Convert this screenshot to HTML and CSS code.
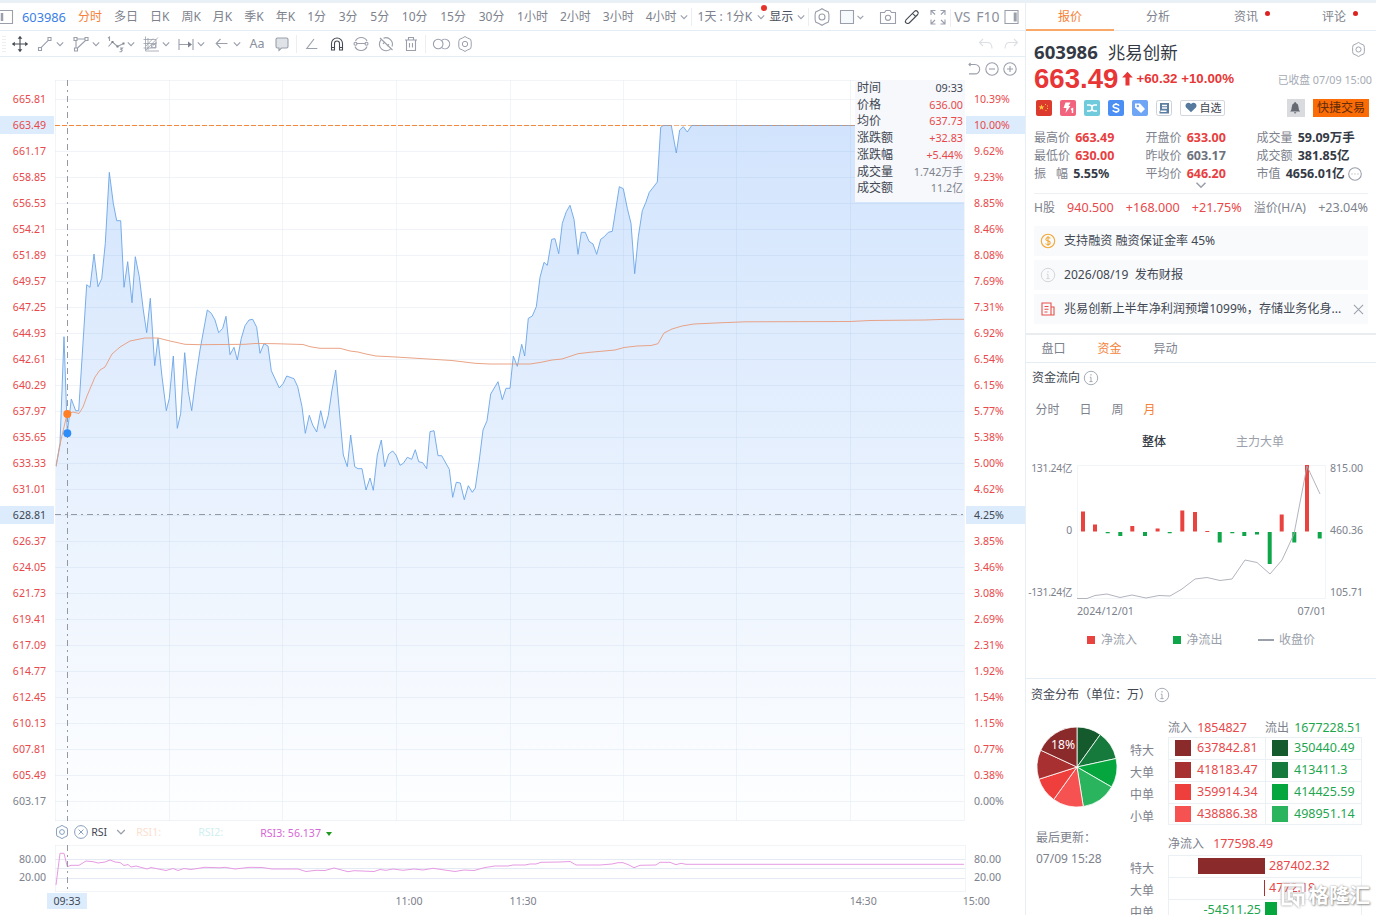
FILE: index.html
```
<!DOCTYPE html>
<html lang="zh-CN">
	<head>
		<meta charset="utf-8">
		<title>603986 兆易创新</title>
		<link rel="stylesheet" href="styles.css">
	</head>
	<body>
		<svg class="defs">
			<symbol id="chev" viewBox="0 0 10 10"><path d="M1.8 3.4 5 6.6 8.2 3.4"/></symbol>
			<symbol id="gear" viewBox="0 0 20 20"><path d="M7.3 3.3 10 1.7l2.7 1.6 3.6 1.6.6 2.6v5l-.6 2.6-3.6 1.6L10 18.3l-2.7-1.6-3.6-1.6-.6-2.6v-5l.6-2.6z"/><circle cx="10" cy="10" r="3"/></symbol>
			<symbol id="info" viewBox="0 0 20 20"><circle cx="10" cy="10" r="8.4"/><path d="M10 5v2M8.5 9H10v5.5M8 14.5h4"/></symbol>
		</svg>
		<div class="app">
			<main class="left">
				<nav class="periods">
					<svg class="ico side" viewBox="0 0 14 14"><path d="M0 .5h12.5v13H0"/><path class="thick" d="M2 3v8"/></svg>
					<span class="code">603986</span>
					<span class="on">分时</span>
					<span>多日</span>
					<span>日K</span>
					<span>周K</span>
					<span>月K</span>
					<span>季K</span>
					<span>年K</span>
					<span class="min">1分</span>
					<span class="min">3分</span>
					<span class="min">5分</span>
					<span class="min">10分</span>
					<span class="min">15分</span>
					<span class="min">30分</span>
					<span>1小时</span>
					<span>2小时</span>
					<span>3小时</span>
					<span class="drop">4小时<svg class="ico chev"><use href="#chev"/></svg></span>
					<span class="drop custom">1天 : 1分K<svg class="ico chev"><use href="#chev"/></svg><i class="dot"></i></span>
					<span class="drop show">显示<svg class="ico chev"><use href="#chev"/></svg></span>
					<div class="tools">
						<svg class="ico"><use href="#gear"/></svg>
						<svg class="ico box" viewBox="0 0 26 20"><path class="fill-pale" d="M1.5 3.5h13v13h-13z"/><path d="m18.5 8.8 2.9 2.9 2.9-2.9"/></svg>
						<svg class="ico camera" viewBox="0 0 20 20"><path d="M2.5 5.500h4l1.500-2h4l1.500 2h4v11h-15z"/><circle cx="10" cy="10.8" r="2.6"/></svg>
						<svg class="ico dark pen" viewBox="0 0 20 20"><path d="m4 12.800 8.500-8.500q1.500-1.300 3 .2t.2 3L7.200 16q-2 1-3.200-.200t0-3zM10.500 6.300l3.300 3.300"/></svg>
						<svg class="ico full" viewBox="0 0 20 20"><path d="M3 8V3.500h4.500M3.500 4 7 7.500M12.500 3.500H17V8M16.500 4 13 7.500M3 12.500V17h4.500M3.500 16.500 7 13M12.500 17H17v-4.500M16.500 16.500 13 13"/></svg>
						<b class="word vs">VS</b>
						<b class="word">F10</b>
						<svg class="ico panel" viewBox="0 0 16 16"><path d="M1 1.500h13v13H1z"/><path class="thick" d="M11.200 3.500v9"/></svg>
					</div>
				</nav>
				<nav class="drawbar">
					<svg class="ico dots" viewBox="0 0 4 20"><path d="M1 2v16M3 2v16"/></svg>
					<svg class="ico dark move" viewBox="0 0 20 20"><path d="M10 3v14M3 10h14"/><path class="solid" d="m10 1.800 2.300 3H7.700zM10 18.200l2.300-3H7.700zM1.800 10l3-2.300v4.600zM18.200 10l-3-2.300v4.600z"/></svg>
					<span class="pair"><svg class="ico" viewBox="0 0 20 20"><path d="m6 13.700 7.500-7.500M3.500 13.500h3v3h-3zM13 3.500h3v3h-3z"/></svg><svg class="ico chev"><use href="#chev"/></svg></span>
					<span class="pair"><svg class="ico" viewBox="0 0 20 20"><path d="M3 3.500h3v3H3zM14 3.500h3v3h-3zM3.500 14h3v3h-3zM6 5h8M5 6.500V14M14.500 6.500 6.500 14"/></svg><svg class="ico chev"><use href="#chev"/></svg></span>
					<span class="pair"><svg class="ico" viewBox="0 0 20 20"><path d="m2.500 12.500 4-4.500 5 4.500 6-3M2 4l1.500-1V7M14 14h2.500l-1.500 1.500q2.500.5 0 2.200h-1.500"/><path class="solid" d="M5.500 7h2v2h-2zM10.500 11.500h2v2h-2zM16.500 8.500h2v2h-2z"/></svg><svg class="ico chev"><use href="#chev"/></svg></span>
					<span class="pair"><svg class="ico hatch" viewBox="0 0 20 20"><path d="M4.500 2.500v14.500H18M2.500 5.500h12.500v8.500H2.500M7 4v12M2.500 9.500h13M5 16 17 3.500M5 12l7-7.500M9 14.500l6.500-6.500M10.500 10.500h4v3h-4z"/></svg><svg class="ico chev"><use href="#chev"/></svg></span>
					<span class="pair"><svg class="ico" viewBox="0 0 20 20"><path d="M3 5v11M17 5v11M3 10.500h11"/><path class="solid" d="m12 7.500 4 3-4 3z"/></svg><svg class="ico chev"><use href="#chev"/></svg></span>
					<span class="pair"><svg class="ico" viewBox="0 0 20 20"><path d="M15.500 9.500h-11M8.500 5l-4.300 4.500L8.500 14"/></svg><svg class="ico chev"><use href="#chev"/></svg></span>
					<b class="aa">Aa</b>
					<svg class="ico" viewBox="0 0 20 20"><path class="fill-gray" d="M5.500 4h9q1.500 0 1.500 1.500v7q0 1.500-1.500 1.500H9.500L7 16.500V14H5.500Q4 14 4 12.500v-7Q4 4 5.500 4z"/></svg>
					<i class="sep"></i>
					<svg class="ico" viewBox="0 0 20 20"><path d="M12 5 4.800 14.500h10.500"/></svg>
					<svg class="ico dark" viewBox="0 0 20 20"><path d="M4.500 16V9.500a5.500 5.500 0 0 1 11 0V16h-3V9.500a2.500 2.500 0 0 0-5 0V16zM4.500 13.500h3M12.500 13.500h3"/></svg>
					<svg class="ico" viewBox="0 0 20 20"><path d="M4.500 7a6.500 6.500 0 0 1 11.500 0M4 12.500a6.500 6.500 0 0 0 12 0M5.500 9.500h9"/><circle cx="4.500" cy="9.800" r="1.500"/><circle cx="15.500" cy="9.800" r="1.500"/></svg>
					<svg class="ico" viewBox="0 0 20 20"><path d="M5 5.800a6.500 6.500 0 0 0 10 8.700M7.500 4.200A6.500 6.500 0 0 1 16 12.500M4 4l12.500 12M7 10q1-1.500 2-2M13 10q-1 1.500-2 2"/></svg>
					<svg class="ico" viewBox="0 0 20 20"><path d="M4 6h12M7.500 6V3.500h5V6M5.500 6v10.500h9V6M8.500 9v4.500M11.500 9v4.500"/></svg>
					<i class="sep"></i>
					<svg class="ico" viewBox="0 0 20 20"><circle cx="7.200" cy="10" r="4.800"/><path d="M10.800 6.300a4.800 4.800 0 1 1 0 7.400"/></svg>
					<svg class="ico small"><use href="#gear"/></svg>
					<span class="history">
						<svg class="ico faint" viewBox="0 0 20 20"><path d="M7 5 3.500 8.500 7 12M4 8.500h8q4 .5 4 6"/></svg>
						<svg class="ico faint" viewBox="0 0 20 20"><path d="m13 5 3.500 3.500L13 12M16 8.500H8q-4 .5-4 6"/></svg>
					</span>
				</nav>
				<section class="chart">
					<div class="axis price">
						<div>665.81</div>
						<div class="mark">663.49</div>
						<div>661.17</div>
						<div>658.85</div>
						<div>656.53</div>
						<div>654.21</div>
						<div>651.89</div>
						<div>649.57</div>
						<div>647.25</div>
						<div>644.93</div>
						<div>642.61</div>
						<div>640.29</div>
						<div>637.97</div>
						<div>635.65</div>
						<div>633.33</div>
						<div>631.01</div>
						<div class="mark cursor">628.81</div>
						<div>626.37</div>
						<div>624.05</div>
						<div>621.73</div>
						<div>619.41</div>
						<div>617.09</div>
						<div>614.77</div>
						<div>612.45</div>
						<div>610.13</div>
						<div>607.81</div>
						<div>605.49</div>
						<div class="flat">603.17</div>
					</div>
					<div class="plot">
						<svg class="canvas" viewBox="55 57 911 765">
							<defs>
								<linearGradient id="area" gradientUnits="userSpaceOnUse" x1="0" y1="125" x2="0" y2="802">
									<stop offset="0" stop-color="#3b8af5" stop-opacity=".23"/>
									<stop offset=".5" stop-color="#3b8af5" stop-opacity=".125"/>
									<stop offset="1" stop-color="#3b8af5" stop-opacity=".01"/>
								</linearGradient>
								<pattern id="rows" patternUnits="userSpaceOnUse" x="55" y="99" width="911" height="26"><path class="grid" d="M0 .5h911"/></pattern>
								<clipPath id="inner"><path d="M56 80h908v741H56z"/></clipPath>
							</defs>
							<rect x="55" y="80" width="909" height="741" fill="url(#rows)"/>
							<path class="grid" d="M55.500 80v741M169.500 80v741M282.500 80v741M396.500 80v741M510.500 80v741M623.500 80v741M736.500 80v741M850.500 80v741M964.500 80v741M55 80.500h909M55 820.500h909"/>
							<path class="line" fill="url(#area)" clip-path="url(#inner)" d="M50 830V466.700H56L60 443.300 64 336.700 67.300 433 71.300 399 75.700 410.700H78.700L86.700 284.700 90 287.300 94 254 98 286.700 101.700 278.700 105.300 243.300 109.300 172.300 113.300 203.300 116.700 220.700H120.700L124 287.300 127.700 261.700 132 302.700 135.300 256.700 139.300 276.700 143.300 310 146.700 332.700 150.300 298.300 154.700 365.700 158 338.300 162 376.700 166.300 410.700 169.300 398.300 173.300 356 177.300 428.300 180.700 413.300 184.700 352.700 188.300 391.700 191.700 410.700 196 376.700 200 350 207.300 310 211.300 313.300 215 320 218.700 332.700 222.700 328.300 226 316.300 230 354.700 234 347.300 237.300 360 241.300 338.300 245 325.700 249 320 252.700 319.300 256.700 327.300 260 353.300 264 343.700 268 346 271.300 370.700 279.300 388 283.300 383.300 286.700 376 294 378.700 297.700 386.700 302 406.700 305.300 433.300 309.300 415.300 312.700 425 316.700 432 320.700 410.700 324.700 428.300 328.300 415.300 332 390 335.700 370 343.300 455 347.300 466.700 350.700 435 354.700 466.700 358 468.700H362L366 490 370 478 373.300 490.300 377.300 455 381.300 440 384.700 466.700 388.700 454 392.700 451 396 455 400 465.300 403.300 463.300 407.300 457.300 411.700 459.300 415.300 449.700 418.700 461.700 422.700 462.700 426.700 468.700 430 431.700 434 430.700 438 455.700H441.700L449.300 469.300 452.700 497.300 456.300 482.300 460.300 483 464.300 499.700 468.300 485.700 472.300 492.300 475.300 488 479.300 460 483 430 487 420.700 490.700 394 498 381.700 502.300 399.700 506 388.300H510L513.300 356 517.300 366.300 521.700 344.300 524.700 356 528.300 318.300 532.300 316 536.300 306.700 540 277.300 544 262.300 547.300 265.300 551.700 239.300 555 238.700 558.700 253.700 562.300 223.300 566.300 211.700 570 205.300 574 219.300 578 254.300 581.300 232.300H585.300L589 241.300 593 244 596.700 254.300 600.700 239.300 604.300 236.700 608.300 232.300 612.300 231.300 619.300 186.700 623.300 188.700 627.300 208.300 631 223.300 634.700 273.700 638.300 236.700 642.300 210.700 645.700 202.700 649.300 192.300 657.300 182 660.700 127.300 663.300 125.500H671.300L676.300 153 679.700 130 683.300 126.700 687.300 132 691.700 125.500H970V830"/>
							<path class="limit" d="M55 125.500h605"/>
							<path class="limit over" d="M660 125.500h304"/>
							<path class="avg" d="M56 466 61 440 67 414 73 412 79 413.500 83 407 87 396 95 377 100 370 105 367 112 354 120 347 130 341 145 338H158L170 341 185 344.300 200 344.700 245 344.300 255 343.500 275 343.700 303 344.500 310 346.700 320 348.300H340L350 351 358 352 366 354 376 356 396 357 428 359 452 360.500 475 363.300 490 364H530L541 362.300 552 360 562 359 578 353.700 590 352.300 615 350 624 347.500 637 346 651 345.500 658 343.700 664 333 672 329 682 326 694 324 720 322.800 745 321.800 850 321.500 870 320.500 925 320 945 319.300H964"/>
							<path class="cross" d="M67.500 80v741M55 514.500h911"/>
							<circle cx="67.300" cy="414" r="4" fill="#ff7f27"/>
							<circle cx="67.300" cy="433.300" r="4" fill="#2e8df7"/>
						</svg>
						<dl class="tip">
							<dt>时间</dt><dd class="ink">09:33</dd>
							<dt>价格</dt><dd class="up">636.00</dd>
							<dt>均价</dt><dd class="up">637.73</dd>
							<dt>涨跌额</dt><dd class="up">+32.83</dd>
							<dt>涨跌幅</dt><dd class="up">+5.44%</dd>
							<dt>成交量</dt><dd>1.742万手</dd>
							<dt>成交额</dt><dd>11.2亿</dd>
						</dl>
					</div>
					<div class="axis pct">
						<span class="zoomers">
							<svg class="ico" viewBox="0 0 14 14"><path d="M3.500 1 2 2.500 3.500 4M2 2.500h6a4.700 4.700 0 0 1 0 9.400H2"/></svg>
							<svg class="ico" viewBox="0 0 14 14"><circle cx="7" cy="7" r="6.200"/><path d="M4 7h6"/></svg>
							<svg class="ico" viewBox="0 0 14 14"><circle cx="7" cy="7" r="6.200"/><path d="M4 7h6M7 4v6"/></svg>
						</span>
						<div>10.39%</div>
						<div class="mark">10.00%</div>
						<div>9.62%</div>
						<div>9.23%</div>
						<div>8.85%</div>
						<div>8.46%</div>
						<div>8.08%</div>
						<div>7.69%</div>
						<div>7.31%</div>
						<div>6.92%</div>
						<div>6.54%</div>
						<div>6.15%</div>
						<div>5.77%</div>
						<div>5.38%</div>
						<div>5.00%</div>
						<div>4.62%</div>
						<div class="mark cursor">4.25%</div>
						<div>3.85%</div>
						<div>3.46%</div>
						<div>3.08%</div>
						<div>2.69%</div>
						<div>2.31%</div>
						<div>1.92%</div>
						<div>1.54%</div>
						<div>1.15%</div>
						<div>0.77%</div>
						<div>0.38%</div>
						<div class="flat">0.00%</div>
					</div>
				</section>
				<div class="rsi-head">
					<svg class="ico blue"><use href="#gear"/></svg>
					<svg class="ico blue" viewBox="0 0 20 20"><circle cx="10" cy="10" r="8"/><path d="m7 7 6 6M13 7l-6 6"/></svg>
					<span class="name">RSI</span>
					<svg class="ico chev"><use href="#chev"/></svg>
					<span class="r1">RSI1:</span>
					<span class="r2">RSI2:</span>
					<span class="r3">RSI3: 56.137</span>
					<i class="down"></i>
				</div>
				<section class="rsi">
					<div class="side-l"><span>80.00</span><span>20.00</span></div>
					<svg class="rsi-canvas" viewBox="55 845 911 48">
						<path class="grid" d="M55.500 845v47M55 845.500h910M55 891.500h910M965.500 845v47"/>
						<path class="level" d="M55 859.500h910M55 868.500h910M55 878.500h910"/>
						<path class="rsi-line" d="M56 885 60 853.300H64L67.300 866.700 71 865.300H79L86 861 93 861.700 98 863 105 862 110 860 115 862 120 862.500 124 865.500 128 864.500 131 867 136 866 147 869 151 867.500 166 870.500 173 868.500 178 870.500 184 868.500 191 869.500 205 867.300 220 867.800 225 867.300 235 869 250 867.300 262 867.500 272 869H298L306 871.500 316 870.300 325 870.500 334 868 348 871.700 354 870.700 374 871.500 380 869.500 386 870.300 393 869 403 870.300 414 869 423 870 433 868.300 455 871.500 464 870 474 870.500 485 867.500 495 866H508L513 865H525L530 864H536L541 862.300 560 862 570 861.500 576 865 600 865 612 864 618 862.700H623L629 865 634 867.700 640 865.300 656 865 660 862.300H670L676 864.700 681 863.300 686 864.300H964"/>
						<path class="cross" d="M67.500 845v47"/>
					</svg>
					<div class="side-r"><span>80.00</span><span>20.00</span></div>
				</section>
				<div class="times">
					<span class="now">09:33</span>
					<span class="t1100">11:00</span>
					<span class="t1130">11:30</span>
					<span class="t1430">14:30</span>
					<span class="t1500">15:00</span>
				</div>
			</main>

			<aside class="right">
				<nav class="tabs">
					<span class="on">报价</span>
					<span>分析</span>
					<span>资讯<i class="dot"></i></span>
					<span>评论<i class="dot"></i></span>
				</nav>
				<header class="quote">
					<div class="title"><b>603986</b><span>兆易创新</span><svg class="ico"><use href="#gear"/></svg></div>
					<div class="last">
						<b class="big">663.49</b>
						<svg class="arrow" viewBox="0 0 12 15"><path d="M6 0 11.800 6.500H8.200V15H3.800V6.500H.2z"/></svg>
						<b class="chg">+60.32 +10.00%</b>
						<span class="closed">已收盘 07/09 15:00</span>
					</div>
					<div class="badges">
						<svg viewBox="0 0 16 16"><rect width="16" height="16" rx="2" fill="#dc3a2c"/><path fill="#ffc93c" d="m5.500 4.500.9 2h2L6.800 7.800l.6 2-1.900-1.200-1.900 1.200.6-2L2.600 6.500h2zM9 4h1v1H9zM11 5.500h1v1h-1zM11 8h1v1h-1zM9.500 10h1v1h-1z"/></svg>
						<svg viewBox="0 0 16 16"><rect width="16" height="16" rx="2" fill="#f2637e"/><path fill="#fff" d="M5.500 2.500h5L8.500 6h2l-5 7 1-5H3.500z"/><path class="white" d="m11 9.500 1.500-.8V13"/></svg>
						<svg viewBox="0 0 16 16"><rect width="16" height="16" rx="2" fill="#6fcbdc"/><path class="white" d="M3 5h2.500q2.500 0 2.500 3t2.500 3H13M3 11h2.500Q8 11 8 8t2.500-3H13"/></svg>
						<svg viewBox="0 0 16 16"><rect width="16" height="16" rx="2" fill="#4b8ff5"/><path class="white" d="M11 5.800Q10.500 4.300 8 4.300T5.200 6.200q0 1.300 2.800 1.800t2.800 1.900q0 1.800-2.800 1.800t-3-1.500M8 3v1.500M8 11.500V13"/></svg>
						<svg viewBox="0 0 16 16"><rect width="16" height="16" rx="2" fill="#6ea5f5"/><path fill="#fff" d="M3 3.500h5l5 5.500-4 4-6-5.500z"/><circle cx="5.800" cy="6" r="1.200" fill="#6ea5f5"/></svg>
						<svg viewBox="0 0 16 16"><rect x=".5" y=".5" width="15" height="15" rx="2" fill="#fff" stroke="#ccd3da"/><path fill="#5d7ea3" d="M4 3h9v10.500H3.500V11H4z"/><path class="white" d="M6 5.500h5M6 8h5M4.500 11.300h6"/></svg>
						<span class="fav"><svg viewBox="0 0 14 12"><path fill="#557a9e" d="M7 11.500 1.300 6Q-.3 3.500 1.500 1.500 4.200-.6 7 2q2.800-2.600 5.500-.5 1.800 2 .2 4.500z"/></svg>自选</span>
						<span class="bell"><svg viewBox="0 0 12 14"><path fill="#666b73" d="M6 0q1 0 1 1.200Q10 2.300 10 6q0 3 1.800 5H.2Q2 9 2 6q0-3.700 3-4.800Q5 0 6 0zM4.500 12h3Q7 13.500 6 13.500T4.500 12z"/></svg></span>
						<span class="trade">快捷交易</span>
					</div>
					<div class="stats">
						<span>最高价 <b class="up">663.49</b></span><span>开盘价 <b class="up">633.00</b></span><span>成交量 <b>59.09万手</b></span>
						<span>最低价 <b class="up">630.00</b></span><span>昨收价 <b class="even">603.17</b></span><span>成交额 <b>381.85亿</b></span>
						<span><em>振</em>幅 <b>5.55%</b></span><span>平均价 <b class="up">646.20</b></span><span>市值 <b>4656.01亿</b><svg class="ico more" viewBox="0 0 14 14"><circle cx="7" cy="7" r="6.300"/><path d="M3.500 7h1M6.500 7h1M9.500 7h1"/></svg></span>
					</div>
					<svg class="ico expand"><use href="#chev"/></svg>
					<div class="hk"><span>H股</span><span class="up">940.500</span><span class="up">+168.000</span><span class="up">+21.75%</span><span>溢价(H/A)</span><span>+23.04%</span></div>
				</header>
				<div class="notes">
					<p><svg class="ico gold" viewBox="0 0 16 16"><circle cx="8" cy="8" r="6.700"/><path d="M10.300 5.500Q9.800 4.500 8 4.500T5.800 6.300q0 1.200 2.200 1.600t2.200 1.800Q10.200 11.500 8 11.500t-2.400-1M8 3v10"/></svg>支持融资 融资保证金率 45%</p>
					<p><svg class="ico pale"><use href="#info"/></svg>2026/08/19&nbsp; 发布财报</p>
					<p><svg class="ico red" viewBox="0 0 16 16"><path d="M2 2h9v12H2zM11 6h3v8h-3M4.500 5.500h4M4.500 8.200h4M4.500 11h3"/></svg>兆易创新上半年净利润预增1099%，存储业务化身...<svg class="ico close" viewBox="0 0 12 12"><path d="m1 1 10 10M11 1 1 11"/></svg></p>
				</div>
				<nav class="subtabs"><span>盘口</span><span class="on">资金</span><span>异动</span></nav>
				<section class="flow">
					<h3>资金流向<svg class="ico"><use href="#info"/></svg></h3>
					<div class="range"><span>分时</span><span>日</span><span>周</span><span class="on">月</span></div>
					<div class="kind"><b>整体</b><span>主力大单</span></div>
					<div class="mini">
						<div class="ml"><span>131.24亿</span><span>0</span><span>-131.24亿</span></div>
						<svg viewBox="1077 460 249 140">
							<path class="grid" d="M1077.500 465.500h248v133h-248z"/>
							<path class="bar-up" d="M1083 511.500v20M1095 524.500v7M1132.300 526v5.500M1157.600 528.500v3M1182.300 510.500v21M1195 512v19.500M1207.300 531v1M1281.700 514.500v17M1307 465v66.500"/>
							<path class="bar-down" d="M1107.700 532v1.200M1120.300 532v4M1145 532v4M1169.700 532v1.200M1219.700 532v10.500M1232.300 532v1.200M1244.300 532v4M1257 532v2.500M1269.700 532v32M1294.300 532v10.500M1319.700 532v6.500"/>
							<path class="close-line" d="M1077 598.500H1087L1095 595.500 1107 594 1120 597.500 1132 595 1146 598 1159 595.500 1170 596 1182 589 1195 579 1207 577.500 1220 580.500 1232 579 1245 560 1257 562.500 1270 574 1282 560 1294 534 1307 466 1320 494"/>
						</svg>
						<div class="mr"><span>815.00</span><span>460.36</span><span>105.71</span></div>
					</div>
					<div class="dates"><span>2024/12/01</span><span>07/01</span></div>
					<div class="legend"><span><i class="sq r"></i>净流入</span><span><i class="sq g"></i>净流出</span><span><i class="ln"></i>收盘价</span></div>
				</section>
				<section class="dist">
					<h3>资金分布（单位：万）<svg class="ico"><use href="#info"/></svg></h3>
					<div class="cols">
						<div class="pie-col">
							<svg class="pie" viewBox="-41 -41 82 82">
								<path fill="#145a2c" d="M0 0V-40A40 40 0 0 1 23.300-32.500z"/>
								<path fill="#157a3b" d="M0 0 23.300-32.500A40 40 0 0 1 39.100-8.500z"/>
								<path fill="#06a63f" d="M0 0 39.100-8.500A40 40 0 0 1 34.600 20z"/>
								<path fill="#2bb45e" d="M0 0 34.600 20A40 40 0 0 1 6.300 39.500z"/>
								<path fill="#f75252" d="M0 0 6.300 39.500A40 40 0 0 1-23.300 32.500z"/>
								<path fill="#ef3f3c" d="M0 0-23.300 32.500A40 40 0 0 1-38.100 12.200z"/>
								<path fill="#a93030" d="M0 0-38.100 12.200A40 40 0 0 1-36.300-16.800z"/>
								<path fill="#8a2a2a" d="M0 0-36.300-16.800A40 40 0 0 1 0-40z"/>
								<text x="-14" y="-18">18%</text>
							</svg>
							<p>最后更新：<br>07/09 15:28</p>
						</div>
						<div class="tables">
							<div class="sum"><span>流入 <b class="up">1854827</b></span><span>流出 <b class="dn">1677228.51</b></span></div>
							<div class="rows inout">
								<label>特大</label><span class="up"><i class="c1"></i>637842.81</span><span class="dn"><i class="d1"></i>350440.49</span>
								<label>大单</label><span class="up"><i class="c2"></i>418183.47</span><span class="dn"><i class="d2"></i>413411.3</span>
								<label>中单</label><span class="up"><i class="c3"></i>359914.34</span><span class="dn"><i class="d3"></i>414425.59</span>
								<label>小单</label><span class="up"><i class="c4"></i>438886.38</span><span class="dn"><i class="d4"></i>498951.14</span>
							</div>
							<div class="sum net-sum"><span>净流入 <b class="up">177598.49</b></span></div>
							<div class="rows net">
								<label>特大</label><span class="neg"><i class="c1" style="width:67px"></i></span><span class="up">287402.32</span>
								<label>大单</label><span class="neg"><i class="c2" style="width:1.5px"></i></span><span class="up">4772.18</span>
								<label>中单</label><span class="neg dn">-54511.25</span><span class="pos"><i class="d3" style="width:12px"></i></span>
							</div>
						</div>
					</div>
				</section>
			</aside>
			<div class="brand">
				<svg viewBox="0 0 26 26"><path d="M12 22H3V3h20v7M13 9H9v8h4M13 13h10v10M18 14v9l-5-5"/></svg>格隆汇
			</div>
		</div>
	</body>
</html>
```
FILE: styles.css
```
* {
	box-sizing: border-box;
}
body {
	margin: 0;
	background: #fff;
	color: #7d828d;
	font: 12px/16px "Noto Sans", "Noto Sans CJK SC", sans-serif;
	overflow: hidden;
}
.defs {
	position: absolute;
	width: 0;
	height: 0;
}
.app {
	position: relative;
	display: grid;
	grid-template-columns: 1026px 350px;
	width: 1376px;
	height: 915px;
	border-top: 3px solid #e9f1f6;
	overflow: hidden;
}
b, em, i {
	font-style: normal;
}
.ico {
	width: 20px;
	height: 20px;
	flex: none;
	fill: none;
	stroke: #9a9fab;
	stroke-width: 1.1;
}
.ico.chev {
	width: 10px;
	height: 10px;
}
.ico.dark {
	stroke: #454a54;
}
.ico.faint {
	stroke: #dcdfe3;
}
.ico .solid {
	fill: #7d828d;
	stroke: none;
}
.dark .solid {
	fill: #454a54;
}
.ico.hatch {
	stroke-width: .8;
}
.fill-gray {
	fill: #dfe3e8;
}
.fill-pale {
	fill: #f7fafd;
}
.up {
	color: #e8484a;
}
.dn {
	color: #1ea64f;
}
.on {
	color: #f58238;
}
.dot {
	position: absolute;
	width: 5px;
	height: 5px;
	border-radius: 50%;
	background: #dd2222;
}

/* toolbars */
.left {
	display: flex;
	flex-direction: column;
	border-right: 1px solid #e7eff5;
}
.periods {
	display: flex;
	align-items: center;
	gap: 12px;
	height: 28px;
	border-bottom: 1px solid #e4edf3;
	white-space: nowrap;
}
.periods .side {
	width: 14px;
	height: 14px;
	margin-right: -4px;
}
.side .thick {
	stroke-width: 2.5;
}
.code {
	font-size: 12.8px;
	color: #3b7fe8;
}
.min {
	margin-right: .7px;
}
.drop {
	position: relative;
	display: flex;
	align-items: center;
	gap: 2px;
	margin-right: -6px;
}
.custom {
	gap: 4px;
	margin-left: 3px;
	margin-right: -9px;
}
.custom .dot {
	top: -4px;
	right: -1px;
	width: 6px;
	height: 6px;
	background: #e5342c;
}
.show {
	gap: 3px;
	color: #4a505c;
}
.tools {
	display: flex;
	align-items: center;
}
.custom::before, .tools::before, .vs::before {
	content: "";
	position: absolute;
	width: 1px;
	height: 18px;
	background: #eceef1;
}
.custom::before {
	left: -7px;
}
.tools, .vs {
	position: relative;
}
.tools::before {
	left: -4px;
}
.vs::before {
	left: -4px;
}
.box {
	width: 26px;
	margin-left: 7px;
}
.camera {
	margin-left: 13px;
}
.pen {
	margin-left: 4px;
}
.full {
	margin-left: 6px;
	margin-right: 6px;
}
.word {
	font-size: 14px;
	font-weight: 400;
	color: #8b909c;
	margin-right: 4px;
}
.word.vs {
	margin-right: 6px;
}
.panel {
	width: 16px;
	height: 16px;
}
.panel .thick {
	stroke-width: 3;
}
.drawbar {
	display: flex;
	align-items: center;
	gap: 4.7px;
	height: 26px;
	border-bottom: 1px solid #e4edf3;
}
.dots {
	width: 4px;
	margin-left: 2px;
	stroke: #dfe2e6;
	stroke-dasharray: 1 2;
}
.move {
	margin: 0 .4px 0 -.5px;
}
.pair {
	display: flex;
	align-items: center;
	margin-right: .6px;
}
.aa {
	width: 20px;
	font-weight: 400;
	font-size: 12.5px;
	text-align: center;
	color: #8b909c;
}
.ico.small {
	width: 18px;
	height: 18px;
}
.sep {
	width: 1px;
	height: 18px;
	background: #eceef1;
}
.history {
	display: flex;
	gap: 5px;
	margin-left: auto;
	margin-right: 4px;
}

/* intraday chart */
.chart {
	display: grid;
	grid-template-columns: 55px 911px 59px;
	height: 765px;
}
.axis {
	position: relative;
	padding-top: 29px;
	font-size: 10.6px;
	color: #e8484a;
}
.axis div {
	height: 18px;
	margin: 4px 0 8px;
	line-height: 19px;
}
.price div {
	width: 54px;
	padding-right: 8px;
	text-align: right;
}
.pct div {
	padding-left: 8px;
}
.axis .mark {
	background: #dcecfc;
}
.axis .cursor {
	color: #414753;
}
.axis .flat {
	color: #7d828d;
}
.zoomers {
	position: absolute;
	top: 5px;
	left: 1px;
	display: flex;
	gap: 4.2px;
}
.zoomers .ico {
	width: 14px;
	height: 14px;
}
.plot {
	position: relative;
}
.canvas {
	display: block;
	width: 911px;
	height: 765px;
}
.grid {
	fill: none;
	stroke: #dfe8f0;
	stroke-opacity: .45;
}
.line {
	stroke: #6aa5e8;
	stroke-width: .9;
}
.avg {
	fill: none;
	stroke: #e89a78;
	stroke-width: .9;
}
.limit {
	stroke: #f08a3c;
	stroke-dasharray: 5 2;
}
.limit.over {
	stroke-opacity: .6;
}
.cross {
	fill: none;
	stroke: #9599a2;
	stroke-dasharray: 6 4 2 4;
}
.tip {
	position: absolute;
	left: 800px;
	top: 23px;
	display: grid;
	grid-template-columns: auto 1fr;
	align-content: start;
	width: 110px;
	height: 122px;
	margin: 0;
	padding: 0 2px;
	background: #f6f8fb;
	color: #414753;
	line-height: 16.7px;
}
.tip dd {
	margin: 0;
	text-align: right;
	font-size: 10.8px;
	color: #7d828d;
}
.tip dd.up {
	color: #e8484a;
}
.tip dd.ink {
	color: #414753;
}

/* RSI strip */
.rsi-head {
	display: flex;
	align-items: center;
	height: 23px;
	padding: 0 0 3px 54px;
	font-size: 10.6px;
}
.rsi-head .ico {
	width: 16px;
	height: 16px;
	margin-right: 2.6px;
}
.rsi-head .chev {
	width: 12px;
	height: 12px;
	margin: 0 9px 0 8px;
}
.blue {
	stroke: #7893b5;
}
.name {
	color: #414753;
}
.r1 {
	width: 62px;
	color: #fbe0cf;
}
.r2 {
	width: 62px;
	color: #cfeff2;
}
.r3 {
	padding-top: 1px;
	color: #d667d6;
}
.down {
	margin: 3px 0 0 5px;
	border: 3px solid transparent;
	border-top: 4px solid #1d9a1d;
	border-bottom: 0;
}
.rsi {
	display: grid;
	grid-template-columns: 55px 911px 59px;
	height: 48px;
	font-size: 10.6px;
}
.side-l, .side-r {
	display: grid;
	grid-template-rows: 18px 18px;
	padding-top: 5px;
	line-height: 19px;
}
.side-l {
	padding-right: 9px;
	text-align: right;
}
.side-r {
	padding-left: 8px;
}
.rsi-canvas {
	width: 911px;
	height: 48px;
}
.level {
	stroke: #e3eaf3;
}
.rsi-line {
	fill: none;
	stroke: #e79be3;
}
.times {
	display: flex;
	height: 16px;
	font-size: 10.6px;
}
.now {
	width: 40px;
	margin-left: 47px;
	text-align: center;
	background: #dcecfc;
	color: #414753;
}
.t1100 {
	margin-left: 308.5px;
}
.t1130 {
	margin-left: 87px;
}
.t1430 {
	margin-left: 313px;
}
.t1500 {
	margin-left: 86px;
}

/* quote panel */
.tabs {
	display: grid;
	grid-template-columns: repeat(4, 88px);
	height: 28px;
	border-bottom: 1px solid #e4edf3;
	line-height: 28px;
	text-align: center;
}
.tabs span {
	position: relative;
}
.tabs .on {
	height: 28px;
	border-bottom: 2px solid #f9a869;
}
.tabs .dot {
	top: 8px;
	right: 20px;
}
.quote {
	height: 191px;
	padding: 9px 8px 0;
}
.title {
	display: flex;
	align-items: center;
	height: 24px;
	color: #343a45;
	font-size: 17.5px;
}
.title b {
	margin-right: 10px;
	font-size: 18.6px;
}
.title .ico {
	width: 17px;
	height: 17px;
	margin: -5px 1px 0 auto;
}
.last {
	display: flex;
	align-items: center;
	height: 29px;
	margin-right: -4px;
	color: #e83536;
	font-family: "Liberation Sans", "Noto Sans CJK SC", sans-serif;
}
.big {
	font-size: 27.6px;
}
.arrow {
	width: 11px;
	height: 15px;
	margin: 0 3px 0 4px;
	fill: #e83536;
}
.chg {
	font-size: 13.3px;
}
.closed {
	margin-left: auto;
	color: #a6abb5;
	font: 10.8px "Noto Sans", "Noto Sans CJK SC", sans-serif;
}
.badges {
	display: flex;
	align-items: center;
	gap: 8px;
	height: 29px;
	padding-left: 1.5px;
}
.badges > svg {
	width: 16px;
	height: 16px;
}
.white {
	fill: none;
	stroke: #fff;
	stroke-width: 1.5;
}
.fav {
	display: flex;
	align-items: center;
	gap: 3px;
	width: 45px;
	height: 16px;
	padding-left: 4px;
	border: 1px solid #d4d8de;
	border-radius: 2px;
	font-size: 11px;
	color: #414753;
}
.fav svg {
	width: 12px;
	height: 11px;
}
.bell {
	display: flex;
	width: 18px;
	height: 18px;
	margin-left: auto;
	padding: 3px;
	background: #d9dbdf;
}
.trade {
	width: 56px;
	height: 18px;
	margin-right: -1px;
	background: #fb6b06;
	color: #642d08;
	line-height: 18px;
	text-align: center;
}
.stats {
	display: grid;
	grid-template-columns: 111.5px 111px 1fr;
	grid-auto-rows: 18px;
	margin-right: -8px;
	padding-top: 7px;
	line-height: 18px;
	white-space: nowrap;
}
.stats b {
	margin-left: 2px;
	font-size: 12.5px;
	color: #343a45;
}
.stats b.up {
	color: #e8403f;
}
.stats b.even {
	color: #6c727e;
}
.stats em {
	margin-right: 10px;
}
.more {
	width: 14px;
	height: 14px;
	margin-left: 3px;
	vertical-align: -3px;
}
.expand {
	display: block;
	width: 14px;
	height: 14px;
	margin: -5px 0 0 160px;
}
.hk {
	display: flex;
	justify-content: space-between;
	margin-top: 1px;
	padding-top: 6px;
	border-top: 1px solid #edf1f4;
	font-size: 12.6px;
}
.hk span:first-child, .hk span:nth-child(5) {
	font-size: 12px;
}
.notes {
	height: 113px;
	padding: 4px 8px 0;
	border-bottom: 2px solid #e9edf0;
}
.notes p {
	display: flex;
	align-items: center;
	height: 30px;
	margin: 0 0 4px;
	padding: 0 4px 0 6px;
	background: #f9fafb;
	color: #414753;
	font-size: 12.1px;
	white-space: nowrap;
}
.notes .ico {
	width: 16px;
	height: 16px;
	margin-right: 8px;
}
.notes .gold {
	stroke: #f2aa3c;
}
.notes .pale {
	stroke: #cdd0d5;
}
.notes .red {
	stroke: #e8504c;
}
.notes .close {
	width: 11px;
	height: 11px;
	margin: 0 0 0 auto;
}
.subtabs {
	display: flex;
	gap: 32px;
	height: 28px;
	padding-left: 15.5px;
	border-bottom: 1px solid #e4edf3;
	line-height: 28px;
}
h3 {
	display: flex;
	align-items: center;
	gap: 3px;
	height: 18px;
	margin: 0;
	color: #414753;
	font-size: 12px;
	font-weight: 400;
}
h3 .ico {
	width: 16px;
	height: 16px;
	margin-top: -1px;
}
.flow {
	height: 316px;
	padding: 6px 0 0 6px;
	border-bottom: 1px solid #e4edf3;
}
.range {
	display: flex;
	gap: 20px;
	padding: 15px 0 0 3.5px;
}
.kind {
	display: flex;
	gap: 70px;
	padding: 16px 0 0 110px;
	color: #9a9fab;
}
.kind b {
	font-weight: 500;
	color: #343a45;
}
.mini {
	display: grid;
	grid-template-columns: 45px 249px 50px;
	height: 140px;
	margin-top: 10px;
	font-size: 10.6px;
}
.mini svg {
	width: 249px;
	height: 140px;
}
.ml, .mr {
	display: grid;
	grid-auto-rows: 62px;
	white-space: nowrap;
}
.ml {
	justify-content: end;
	justify-items: end;
	padding-right: 5px;
	font-size: 10.4px;
	letter-spacing: -.3px;
}
.mr {
	padding-left: 4px;
}
.close-line {
	fill: none;
	stroke: #a8acb6;
	stroke-width: .9;
}
.bar-up {
	stroke: #e8433f;
	stroke-width: 4;
}
.bar-down {
	stroke: #0fa649;
	stroke-width: 4;
}
.dates {
	display: flex;
	justify-content: space-between;
	width: 249px;
	margin: 3px 0 0 45px;
	font-size: 10.7px;
}
.legend {
	display: flex;
	gap: 35.5px;
	padding: 13px 0 0 55px;
	color: #9a9fab;
}
.legend span {
	display: flex;
	align-items: center;
}
.sq {
	width: 8px;
	height: 8px;
	margin-right: 6px;
}
.ln {
	width: 16px;
	height: 1.5px;
	margin-right: 5px;
	background: #9a9fab;
}
.r {
	background: #e8433f;
}
.g {
	background: #0fa649;
}
.dist {
	padding: 7px 0 0 6px;
}
.dist h3 {
	margin-left: -1px;
}
.cols {
	display: flex;
	height: 240px;
	padding-top: 16px;
}
.pie-col {
	width: 96px;
	padding: 6px 0 0 3.5px;
}
.pie {
	display: block;
	width: 82px;
	height: 82px;
}
.pie path {
	stroke: #fff;
	stroke-width: .8;
}
.pie text {
	fill: #fff;
	font-size: 12.2px;
	text-anchor: middle;
}
.pie-col p {
	margin: 19px 0 0 .5px;
	line-height: 21px;
	white-space: nowrap;
}
.sum {
	display: grid;
	grid-template-columns: 97px 100px;
	height: 17px;
	margin-left: 40px;
	white-space: nowrap;
}
.sum b {
	margin-left: 2px;
	font-size: 12.4px;
	font-weight: 400;
}
.net-sum {
	margin-top: 11px;
	height: 19px;
}
.net-sum b {
	margin-left: 6px;
}
.rows {
	display: grid;
	grid-template-columns: 40px 97px 97px;
	grid-auto-rows: 22px;
	font-size: 12.5px;
	line-height: 20px;
}
.rows label {
	padding: 4px 0 0 2px;
	font-size: 12px;
}
.rows span {
	display: flex;
	align-items: center;
	padding-bottom: 2px;
	padding-left: 6px;
	border-top: 1px solid #eaf0f4;
	border-left: 1px solid #eaf0f4;
}
.rows span:nth-child(3n) {
	border-right: 1px solid #eaf0f4;
}
.inout {
	height: 88px;
}
.inout span:nth-last-child(-n+2) {
	border-bottom: 1px solid #eaf0f4;
	padding-bottom: 1px;
}
.rows i {
	width: 16px;
	height: 16px;
	margin-right: 6px;
}
.net .neg {
	justify-content: flex-end;
	border-right: 0;
}
.net .neg i {
	margin: 0;
}
.net .neg.dn {
	padding-right: 4px;
}
.net .up {
	padding-left: 4px;
	border-left: 0;
}
.net .pos {
	padding-left: 0;
	border-left: 0;
}
.c1 {
	background: #8a2a2a;
}
.c2 {
	background: #a93030;
}
.c3 {
	background: #ef3f3c;
}
.c4 {
	background: #f75252;
}
.d1 {
	background: #145a2c;
}
.d2 {
	background: #157a3b;
}
.d3 {
	background: #06a63f;
}
.d4 {
	background: #2bb45e;
}
.brand {
	position: absolute;
	right: 6px;
	bottom: 7px;
	display: flex;
	align-items: center;
	gap: 3px;
	color: #fff;
	font-size: 20.5px;
	font-weight: 700;
	line-height: 26px;
	text-shadow: 0 0 2px #999, 1px 1px 2px #999;
}
.brand svg {
	width: 26px;
	height: 26px;
	fill: none;
	stroke: #fff;
	stroke-width: 2.8;
	filter: drop-shadow(0 0 1px #888);
}
```
